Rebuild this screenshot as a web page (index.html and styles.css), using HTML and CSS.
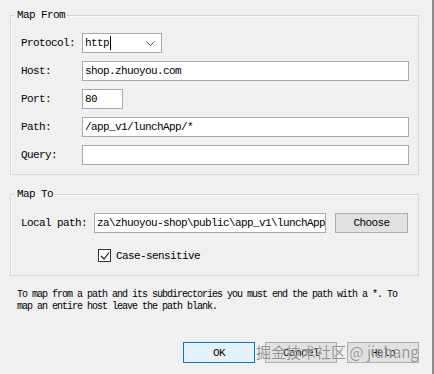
FILE: index.html
```html
<!DOCTYPE html>
<html>
  <head>
    <link rel="stylesheet" href="styles.css">
    <title>Edit Mapping</title>
  </head>
  <body>
    <div class="dialog">
      <fieldset class="group">
        <legend>Map From</legend>
        <div class="from-grid">
          <label>Protocol:</label>
          <div class="select-box">
            <span>http</span><span class="caret"></span>
            <svg class="chevron" width="9" height="5" viewBox="0 0 9 5"><polyline points="0.5,0.5 4.5,4.5 8.5,0.5" fill="none" stroke="#555" stroke-width="1"/></svg>
          </div>
          <label>Host:</label>
          <div class="text-box">shop.zhuoyou.com</div>
          <label>Port:</label>
          <div class="text-box port-box">80</div>
          <label>Path:</label>
          <div class="text-box">/app_v1/lunchApp/*</div>
          <label>Query:</label>
          <div class="text-box"></div>
        </div>
      </fieldset>

      <fieldset class="group map-to">
        <legend>Map To</legend>
        <div class="to-body">
          <div class="local-row">
            <label>Local path:</label>
            <div class="text-box local-box">za\zhuoyou-shop\public\app_v1\lunchApp</div>
            <button class="win-button choose-button">Choose</button>
          </div>
          <div class="check-row">
            <span class="check-box">
              <svg width="10" height="10" viewBox="0 0 10 10"><polyline points="1,5 4,8 9,1.5" fill="none" stroke="#222" stroke-width="1.2"/></svg>
            </span>
            <span>Case-sensitive</span>
          </div>
        </div>
      </fieldset>

      <p class="hint">To map from a path and its subdirectories you must end the path with a *. To<br>map an entire host leave the path blank.</p>

      <div class="footer">
        <button class="win-button default-button">OK</button>
        <button class="win-button">Cancel</button>
        <button class="win-button">Help</button>
        <span class="watermark">掘金技术社区 @ jiahang</span>
      </div>
    </div>
  </body>
</html>
```

FILE: styles.css
```css
body {
  margin: 0;
  background-color: #f0f0f0;
  color: #000;
  font-family: "Liberation Mono", "Noto Sans CJK SC", monospace;
  font-size: 11px;
  letter-spacing: -0.6px;
}

.dialog {
  box-sizing: border-box;
  width: 434px;
  height: 374px;
  padding: 9px 13px 0 10px;
  border-right: 2px solid #8c8c8c;
}

.group {
  margin: 0;
  padding: 0;
  border: 1px solid #d6d6d6;
  box-shadow: inset 1px 1px 0 #fafafa;
}

.group legend {
  margin-left: 4px;
  padding: 0 2px;
  line-height: 12px;
}

.from-grid {
  display: grid;
  grid-template-columns: 61px 1fr;
  grid-auto-rows: 20px;
  row-gap: 8px;
  padding: 12px 9px 9px 10px;
  align-items: center;
}

.text-box,
.select-box {
  box-sizing: border-box;
  height: 20px;
  line-height: 18px;
  padding: 0 2px;
  border: 1px solid #a9a9a9;
  background-color: #fff;
  white-space: nowrap;
  overflow: hidden;
}

.port-box {
  width: 41px;
}

.select-box {
  width: 80px;
  display: flex;
  align-items: center;
}

.caret {
  width: 1px;
  height: 14px;
  margin-left: 1px;
  background-color: #000;
}

.chevron {
  margin-left: auto;
  margin-right: 4px;
}

.map-to {
  margin-top: 13px;
}

.to-body {
  padding: 13px 9px 13px 10px;
}

.local-row {
  display: flex;
  align-items: center;
  height: 20px;
}

.local-row label {
  width: 73px;
}

.local-box {
  width: 232px;
  text-align: right;
}

.win-button {
  box-sizing: border-box;
  height: 21px;
  width: 72px;
  padding: 0;
  border: 1px solid #adadad;
  background-color: #e1e1e1;
  font-family: inherit;
  font-size: 11px;
  letter-spacing: -0.6px;
  color: #000;
}

.choose-button {
  height: 20px;
  width: 73px;
  margin-left: 9px;
}

.check-row {
  display: flex;
  align-items: center;
  gap: 5px;
  margin-top: 16px;
  margin-left: 77px;
}

.check-box {
  box-sizing: border-box;
  width: 13px;
  height: 13px;
  border: 1px solid #333;
  background-color: #fff;
  display: flex;
  align-items: center;
  justify-content: center;
}

.hint {
  margin: 13px 0 0 7px;
  font-size: 10px;
  letter-spacing: -1px;
  line-height: 12px;
}

.footer {
  position: relative;
  display: flex;
  justify-content: flex-end;
  gap: 10px;
  margin-top: 29px;
}

.default-button {
  border-color: #0078d7;
  background-color: #e5f1fb;
}

.watermark {
  position: absolute;
  left: 246px;
  top: 0;
  white-space: nowrap;
  font-family: "Noto Sans CJK SC", "Noto Sans", sans-serif;
  font-size: 15px;
  letter-spacing: 0;
  line-height: 20px;
  color: rgba(110, 110, 110, 0.75);
  text-shadow: 0 0 1px #fff;
}
```
